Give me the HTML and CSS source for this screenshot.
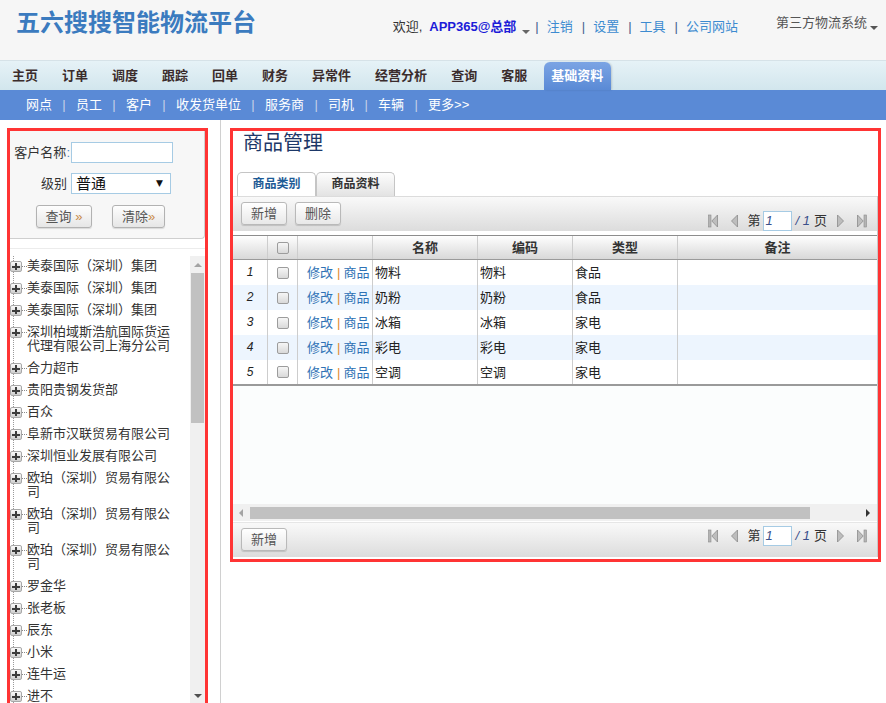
FILE: index.html
```html
<!DOCTYPE html>
<html lang="zh-CN">
<head>
<meta charset="utf-8">
<title>五六搜搜智能物流平台</title>
<link rel="stylesheet" href="styles.css">
</head>
<body>
<div class="header">
  <div class="logo">五六搜搜智能物流平台</div>
  <div class="userbar">
    <span class="welcome">欢迎,</span>
    <span class="user">APP365@总部</span>
    <span class="caret"></span>
    <span class="sep first">|</span><a class="hl">注销</a>
    <span class="sep">|</span><a class="hl">设置</a>
    <span class="sep">|</span><a class="hl">工具</a>
    <span class="sep">|</span><a class="hl">公司网站</a>
  </div>
  <div class="sys">第三方物流系统<span class="caret sys-caret"></span></div>
</div>
<div class="nav">
  <a>主页</a><a>订单</a><a>调度</a><a>跟踪</a><a>回单</a><a>财务</a><a>异常件</a><a>经营分析</a><a>查询</a><a>客服</a><a class="on">基础资料</a>
</div>
<div class="subnav">
  <a>网点</a><span class="ssep">|</span><a>员工</a><span class="ssep">|</span><a>客户</a><span class="ssep">|</span><a>收发货单位</a><span class="ssep">|</span><a>服务商</a><span class="ssep">|</span><a>司机</a><span class="ssep">|</span><a>车辆</a><span class="ssep">|</span><a>更多&gt;&gt;</a>
</div>
<div class="main">
  <div class="leftcol">
    <div class="lbox">
      <div class="search">
        <label class="lab1">客户名称<span class="colon">:</span></label>
        <span class="inp"></span>
        <label class="lab2">级别</label>
        <div class="sel"><span>普通</span><span class="arr">▼</span></div>
        <div class="sbtns">
          <span class="sbtn b1">查询 <em>»</em></span>
          <span class="sbtn b2">清除<em>»</em></span>
        </div>
      </div>
      <div class="treewrap">
        <div class="tree">
          <div class="list">
            <div class="ti"><i class="pl"></i><i class="dl"></i><span class="tt">美泰国际（深圳）集团</span></div>
            <div class="ti"><i class="pl"></i><i class="dl"></i><span class="tt">美泰国际（深圳）集团</span></div>
            <div class="ti"><i class="pl"></i><i class="dl"></i><span class="tt">美泰国际（深圳）集团</span></div>
            <div class="ti"><i class="pl"></i><i class="dl"></i><span class="tt">深圳柏域斯浩航国际货运代理有限公司上海分公司</span></div>
            <div class="ti"><i class="pl"></i><i class="dl"></i><span class="tt">合力超市</span></div>
            <div class="ti"><i class="pl"></i><i class="dl"></i><span class="tt">贵阳贵钢发货部</span></div>
            <div class="ti"><i class="pl"></i><i class="dl"></i><span class="tt">百众</span></div>
            <div class="ti"><i class="pl"></i><i class="dl"></i><span class="tt">阜新市汉联贸易有限公司</span></div>
            <div class="ti"><i class="pl"></i><i class="dl"></i><span class="tt">深圳恒业发展有限公司</span></div>
            <div class="ti"><i class="pl"></i><i class="dl"></i><span class="tt">欧珀（深圳）贸易有限公司</span></div>
            <div class="ti"><i class="pl"></i><i class="dl"></i><span class="tt">欧珀（深圳）贸易有限公司</span></div>
            <div class="ti"><i class="pl"></i><i class="dl"></i><span class="tt">欧珀（深圳）贸易有限公司</span></div>
            <div class="ti"><i class="pl"></i><i class="dl"></i><span class="tt">罗金华</span></div>
            <div class="ti"><i class="pl"></i><i class="dl"></i><span class="tt">张老板</span></div>
            <div class="ti"><i class="pl"></i><i class="dl"></i><span class="tt">辰东</span></div>
            <div class="ti"><i class="pl"></i><i class="dl"></i><span class="tt">小米</span></div>
            <div class="ti"><i class="pl"></i><i class="dl"></i><span class="tt">连牛运</span></div>
            <div class="ti"><i class="pl"></i><i class="dl"></i><span class="tt">进不</span></div>
          </div>
          <div class="vscroll">
            <span class="up"></span>
            <span class="thumb"></span>
            <span class="down"></span>
          </div>
        </div>
      </div>
    </div>
  </div>
  <div class="rightcol">
    <div class="rbox">
      <div class="title">商品管理</div>
      <div class="tabs">
        <span class="tab on">商品类别</span>
        <span class="tab">商品资料</span>
      </div>
      <div class="grid">
        <div class="toolbar top">
          <span class="btn">新增</span>
          <span class="btn">删除</span>
          <div class="pager ptop">
            <svg class="pi" width="10" height="14" viewBox="0 0 10 14"><rect x="0.5" y="1" width="2.5" height="12" fill="#b4b4b4" stroke="#8c8c8c" stroke-width="0.6"/><polygon points="9.5,1 3.8,7 9.5,13" fill="#bdbdbd" stroke="#8c8c8c" stroke-width="0.8"/></svg>
            <svg class="pi prev" width="8" height="14" viewBox="0 0 8 14"><polygon points="7.5,1 1.5,7 7.5,13" fill="#bdbdbd" stroke="#8c8c8c" stroke-width="0.8"/></svg>
            <span class="di">第</span>
            <span class="pinp">1</span>
            <span class="tot">/ 1</span>
            <span class="ye">页</span>
            <svg class="pi next" width="8" height="14" viewBox="0 0 8 14"><polygon points="0.5,1 6.5,7 0.5,13" fill="#bdbdbd" stroke="#8c8c8c" stroke-width="0.8"/></svg>
            <svg class="pi last" width="10" height="14" viewBox="0 0 10 14"><polygon points="0.5,1 6.2,7 0.5,13" fill="#bdbdbd" stroke="#8c8c8c" stroke-width="0.8"/><rect x="7" y="1" width="2.5" height="12" fill="#b4b4b4" stroke="#8c8c8c" stroke-width="0.6"/></svg>
          </div>
        </div>
        <div class="dg">
          <div class="row head">
            <span></span><span class="ck"><i class="cb"></i></span><span></span><span>名称</span><span>编码</span><span>类型</span><span>备注</span>
          </div>
          <div class="row">
            <span class="rn">1</span><span class="ck"><i class="cb"></i></span><span class="act"><a>修改</a><b>|</b><a>商品</a></span><span>物料</span><span>物料</span><span>食品</span><span></span>
          </div>
          <div class="row alt">
            <span class="rn">2</span><span class="ck"><i class="cb"></i></span><span class="act"><a>修改</a><b>|</b><a>商品</a></span><span>奶粉</span><span>奶粉</span><span>食品</span><span></span>
          </div>
          <div class="row">
            <span class="rn">3</span><span class="ck"><i class="cb"></i></span><span class="act"><a>修改</a><b>|</b><a>商品</a></span><span>冰箱</span><span>冰箱</span><span>家电</span><span></span>
          </div>
          <div class="row alt">
            <span class="rn">4</span><span class="ck"><i class="cb"></i></span><span class="act"><a>修改</a><b>|</b><a>商品</a></span><span>彩电</span><span>彩电</span><span>家电</span><span></span>
          </div>
          <div class="row lastrow">
            <span class="rn">5</span><span class="ck"><i class="cb"></i></span><span class="act"><a>修改</a><b>|</b><a>商品</a></span><span>空调</span><span>空调</span><span>家电</span><span></span>
          </div>
        </div>
        <div class="filler"></div>
        <div class="hscroll">
          <span class="harr hl-arr"></span>
          <span class="hthumb"></span>
          <span class="harr hr-arr"></span>
        </div>
        <div class="toolbar bottom">
          <span class="btn">新增</span>
          <div class="pager pbot">
            <svg class="pi" width="10" height="14" viewBox="0 0 10 14"><rect x="0.5" y="1" width="2.5" height="12" fill="#b4b4b4" stroke="#8c8c8c" stroke-width="0.6"/><polygon points="9.5,1 3.8,7 9.5,13" fill="#bdbdbd" stroke="#8c8c8c" stroke-width="0.8"/></svg>
            <svg class="pi prev" width="8" height="14" viewBox="0 0 8 14"><polygon points="7.5,1 1.5,7 7.5,13" fill="#bdbdbd" stroke="#8c8c8c" stroke-width="0.8"/></svg>
            <span class="di">第</span>
            <span class="pinp">1</span>
            <span class="tot">/ 1</span>
            <span class="ye">页</span>
            <svg class="pi next" width="8" height="14" viewBox="0 0 8 14"><polygon points="0.5,1 6.5,7 0.5,13" fill="#bdbdbd" stroke="#8c8c8c" stroke-width="0.8"/></svg>
            <svg class="pi last" width="10" height="14" viewBox="0 0 10 14"><polygon points="0.5,1 6.2,7 0.5,13" fill="#bdbdbd" stroke="#8c8c8c" stroke-width="0.8"/><rect x="7" y="1" width="2.5" height="12" fill="#b4b4b4" stroke="#8c8c8c" stroke-width="0.6"/></svg>
          </div>
        </div>
      </div>
    </div>
  </div>
</div>
</body>
</html>
```

FILE: styles.css
```css
* { box-sizing: border-box; }
html, body { margin: 0; padding: 0; width: 886px; height: 703px; overflow: hidden; }
body {
  font-family: "Liberation Sans", "Noto Sans CJK SC", sans-serif;
  font-size: 13px;
  color: #333;
  background: #fff;
}
a { text-decoration: none; cursor: pointer; }
i, b, em { font-style: normal; }

/* header */
.header { height: 60px; background: #f6f6f6; display: flex; align-items: flex-start; }
.logo { margin: 10px 0 0 16px; font-size: 24px; font-weight: bold; color: #3b7bbf; line-height: 26px; letter-spacing: 0; }
.userbar { margin: 18px 0 0 auto; display: flex; align-items: center; line-height: 18px; font-size: 13px; }
.welcome { color: #333; }
.user { margin-left: 7px; color: #1c1cd8; font-weight: bold; }
.caret { width: 0; height: 0; border-left: 4px solid transparent; border-right: 4px solid transparent; border-top: 4px solid #666; margin: 9px 0 0 6px; }
.sep { color: #41608e; margin: 0 8px 0 9px; }
.sep.first { margin-left: 5px; }
.hl { color: #3d8bd0; }
.sys { margin: 14px 8px 0 38px; line-height: 18px; color: #555; display: flex; align-items: center; }
.sys-caret { margin: 9px 0 0 3px; border-top-color: #555; }

/* nav */
.nav { height: 30px; display: flex; align-items: flex-end; background: linear-gradient(#e6f2f7, #d2e6ed); border-top: 1px solid #d6e2e8; }
.nav a { padding: 0 12px; line-height: 28px; font-weight: bold; color: #3b2c2c; font-size: 13px; }
.nav a.on { margin-left: 5px; padding: 0 8px 0 7px; color: #fff; background: linear-gradient(#7ba4e4, #5a8ad6); border-radius: 6px 6px 0 0; box-shadow: 1px 0 2px rgba(0,0,0,0.15); }

/* subnav */
.subnav { height: 30px; background: #5a8ad6; display: flex; align-items: center; padding-left: 16px; }
.subnav a { color: #fff; padding: 0 10px; line-height: 30px; }
.ssep { width: 4px; text-align: center; color: #c6d1e6; line-height: 30px; }

/* main */
.main { display: flex; height: 583px; overflow: hidden; }
.leftcol { width: 221px; flex: none; border-right: 1px solid #d0d0d0; }
.lbox { margin: 8px 0 0 7px; width: 201px; height: 640px; border: 3px solid #ff3434; border-bottom: none; }

.search {
  height: 108px;
  background: #f7f7f7;
  border-right: 1px solid #cfcfcf;
  border-bottom: 1px solid #cfcfcf;
  border-radius: 0 0 4px 0;
  display: grid;
  grid-template-columns: 61px 1fr;
  grid-template-rows: 21px 21px 23px;
  row-gap: 10px;
  padding-top: 11px;
  align-items: center;
}
.lab1 { text-align: right; padding-right: 1px; line-height: 21px; color: #333; }
.colon { color: #4c86c4; }
.lab2 { text-align: right; padding-right: 4px; line-height: 21px; color: #333; }
.inp { width: 102px; height: 21px; border: 1px solid #a6cbe4; background: #fff; }
.sel { width: 100px; height: 21px; border: 1px solid #a6cbe4; background: #fff; display: flex; align-items: center; justify-content: space-between; padding: 0 7px 0 4px; font-size: 15px; line-height: 19px; color: #111; }
.sel .arr { font-size: 9px; color: #111; font-family: "DejaVu Sans", sans-serif; }
.sbtns { grid-column: 1 / 3; display: flex; padding-left: 26px; gap: 20px; margin-top: 1px; }
.sbtn { height: 23px; border: 1px solid #b2b2b2; border-radius: 3px; background: linear-gradient(#fefefe, #e6e6e6); box-shadow: 0 1px 1px rgba(0,0,0,0.12); color: #555; text-align: center; line-height: 21px; font-size: 13px; }
.sbtn.b1 { width: 56px; }
.sbtn.b2 { width: 53px; }
.sbtn em { color: #c98a4a; }

.treewrap { margin-top: 9px; border-top: 1px solid #ececec; padding-top: 7px; }
.tree { display: flex; height: 447px; }
.list {
  flex: 1;
  overflow: hidden;
  background: repeating-linear-gradient(to bottom, #9a9a9a 0 1px, transparent 1px 2px) 3px 0 / 1px 100% no-repeat;
}
.ti { display: flex; align-items: flex-start; padding: 3px 0 5px 0; line-height: 14px; }
.pl {
  flex: none; width: 12px; height: 11px; margin-top: 2px;
  border: 1px solid #a8a8a8; border-radius: 2px;
  background:
    linear-gradient(#3c3c3c, #3c3c3c) center / 8px 2px no-repeat,
    linear-gradient(#3c3c3c, #3c3c3c) center / 2px 7px no-repeat,
    linear-gradient(#fafafa, #cfcfcf);
}
.dl { flex: none; width: 5px; height: 0; margin-top: 7px; border-top: 1px dotted #8a8a8a; }
.tt { flex: none; width: 150px; padding-left: 0; color: #333; font-size: 13px; }
.vscroll { width: 15px; flex: none; background: #f0f0f0; display: flex; flex-direction: column; align-items: center; }
.up { width: 0; height: 0; border-left: 4px solid transparent; border-right: 4px solid transparent; border-bottom: 4px solid #a3a3a3; margin-top: 7px; }
.thumb { width: 13px; height: 150px; background: #c1c1c1; margin-top: 6px; }
.down { width: 0; height: 0; border-left: 4px solid transparent; border-right: 4px solid transparent; border-top: 4px solid #505050; margin-top: auto; margin-bottom: 5px; }

/* right */
.rightcol { flex: 1; }
.rbox { margin: 8px 0 0 9px; width: 651px; height: 434px; border: 3px solid #ff3434; display: flex; flex-direction: column; padding-bottom: 2px; }
.title { font-size: 20px; line-height: 24px; padding-left: 10px; color: #1d3868; }
.tabs { display: flex; margin: 17px 0 0 4px; height: 24px; }
.tab { width: 79px; height: 24px; border: 1px solid #c5c5c5; border-bottom: none; border-radius: 5px 5px 0 0; text-align: center; line-height: 23px; font-size: 12px; font-weight: bold; color: #333; background: linear-gradient(#fdfdfd, #e3e3e3); }
.tab.on { background: #fff; color: #1e5b96; }

.grid { flex: 1; display: flex; flex-direction: column; border-right: 1px solid #c8c8c8; width: 645px; }
.toolbar { display: flex; align-items: flex-start; background: linear-gradient(#f9f9f9, #dcdcdc); padding-left: 8px; }
.toolbar.top { height: 35px; padding-top: 5px; border-top: 1px solid #dcdcdc; }
.toolbar.bottom { height: 35px; padding-top: 5px; margin-top: 1px; border-top: 1px solid #e6e6e6; }
.btn { height: 23px; padding: 0 9px; margin-right: 8px; border: 1px solid #b9b9b9; border-radius: 3px; background: linear-gradient(#fff, #e8e8e8); box-shadow: 0 1px 1px rgba(0,0,0,0.15); color: #555; line-height: 21px; font-size: 13px; }

.pager { margin-left: auto; display: flex; align-items: center; padding-right: 10px; height: 20px; }
.ptop { margin-top: 9px; }
.pbot { margin-top: -2px; }
.pi { flex: none; display: block; }
.pi.prev { margin-left: 12px; }
.di { margin-left: 10px; color: #333; line-height: 20px; }
.pinp { margin-left: 2px; width: 29px; height: 20px; border: 1px solid #a6cbe4; background: #fff; font-style: italic; color: #3a4f8a; line-height: 18px; padding-left: 2px; font-size: 13px; }
.tot { margin-left: 4px; font-style: italic; color: #3a4f8a; line-height: 20px; }
.ye { margin-left: 4px; color: #333; line-height: 20px; }
.pi.next { margin-left: 10px; }
.pi.last { margin-left: 12px; }

.dg { margin-top: 4px; }
.row { display: grid; grid-template-columns: 35px 30px 75px 105px 95px 105px 199px; height: 25px; background: #fff; }
.row > span { border-right: 1px solid #cdcdcd; line-height: 25px; color: #222; padding-left: 2px; overflow: hidden; white-space: nowrap; }
.row > span:last-child { border-right: none; }
.row.alt { background: #edf5fe; }
.row.head { background: linear-gradient(#fefefe, #d8d8d8); border-top: 1px solid #8c8c8c; border-bottom: 1px solid #9a9a9a; }
.row.head > span { line-height: 23px; text-align: center; font-weight: bold; color: #333; padding-left: 0; }
.row.lastrow { height: 26px; border-bottom: 2px solid #9a9a9a; }
.rn { text-align: center; font-style: italic; color: #444; font-size: 12px; padding-left: 0 !important; }
.ck { display: flex; align-items: center; justify-content: center; padding-left: 0 !important; }
.cb { width: 12px; height: 12px; border: 1px solid #9c9c9c; border-radius: 2px; background: linear-gradient(#f6f6f6, #d9d9d9); }
.act { padding-left: 9px !important; }
.act a { color: #2f72b5; }
.act b { color: #e08a2b; font-weight: normal; margin: 0 3px 0 4px; }

.filler { flex: 1; background: #fbfdfd; }
.hscroll { height: 17px; background: #f0f0f0; display: flex; align-items: center; padding: 0 6px 0 6px; }
.harr { width: 0; height: 0; border-top: 4px solid transparent; border-bottom: 4px solid transparent; }
.hl-arr { border-right: 4px solid #a3a3a3; }
.hthumb { width: 560px; height: 12px; background: #c1c1c1; margin-left: 7px; }
.hr-arr { border-left: 4px solid #333; margin-left: auto; margin-right: 1px; }
```
